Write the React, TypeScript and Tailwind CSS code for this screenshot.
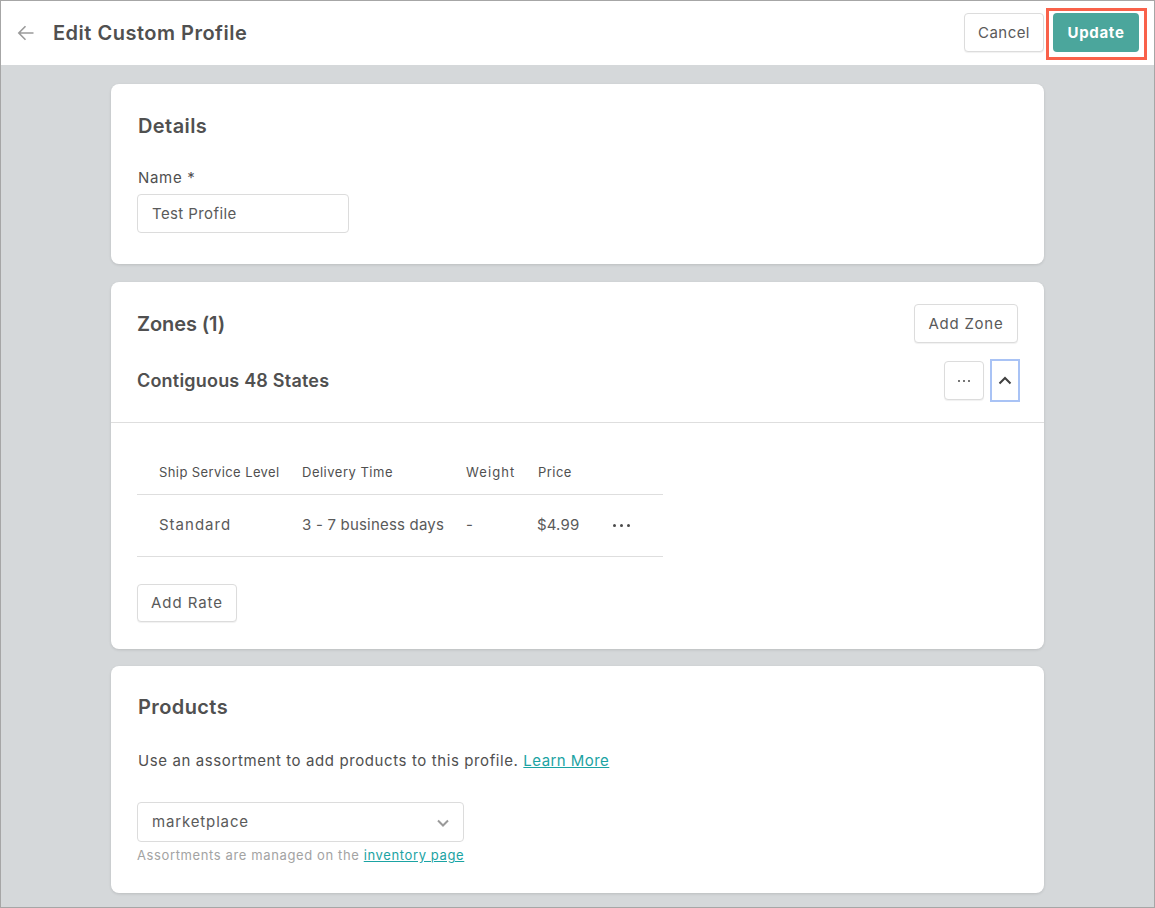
import React from "react";

const btn = "flex items-center justify-center rounded border border-[#dcdcdc] bg-white pt-px text-[15px] text-[#5a5a5a] shadow-[0_1px_1px_rgba(0,0,0,0.06)]";

function Dots({ r = 1.2, gap = 5 }: { r?: number; gap?: number }) {
  return (
    <svg width={gap * 2 + r * 2 + 2} height={r * 2 + 2} fill="#4a4a4a" aria-hidden="true">
      <circle cx={r + 1} cy={r + 1} r={r} />
      <circle cx={r + 1 + gap} cy={r + 1} r={r} />
      <circle cx={r + 1 + gap * 2} cy={r + 1} r={r} />
    </svg>
  );
}

export default function App() {
  return (
    <div className="flex h-[908px] w-[1155px] flex-col overflow-hidden border border-[#a6a6a6] bg-[#d5d8da] font-['Inter',sans-serif] text-[#505050]">
      <header className="flex h-[64px] shrink-0 items-center bg-white pl-4 pr-[7px]">
        <svg width="18" height="18" viewBox="0 0 18 18" fill="none" stroke="#9a9a9a" strokeWidth="1.6" aria-hidden="true">
          <path d="M16.5 9H1.8M8.5 2.2 1.8 9l6.7 6.8" />
        </svg>
        <h1 className="ml-[18px] text-[20px] font-semibold tracking-[0.5px]">Edit Custom Profile</h1>
        <div className="ml-auto flex items-start gap-[2px] self-start pt-[7px]">
          <button className={`${btn} mt-[5px] h-[39px] w-[80px] tracking-[0.45px]`}>Cancel</button>
          <div className="border-[3px] border-[#f9614a] pb-[5px] pl-[4px] pr-[5px] pt-[2px]">
            <button className="flex h-[39px] w-[86px] items-center justify-center rounded bg-[#4ba69c] pt-px text-[15px] font-bold tracking-[0.7px] text-white">Update</button>
          </div>
        </div>
      </header>

      <main className="mx-auto mt-[19px] flex w-[933px] flex-col">
        <section className="h-[180px] rounded-lg bg-white px-[26px] pt-[29px] shadow-[0_1px_3px_rgba(0,0,0,0.12)]">
          <h2 className="ml-px text-[20px] leading-[26px] font-semibold tracking-[0.4px]">Details</h2>
          <label className="ml-px mt-[29px] block text-[15px] leading-[20px] tracking-[0.7px]">Name *</label>
          <div className="mt-[6px] flex h-[39px] w-[212px] items-center rounded border border-[#dcdcdc] px-[14px] pt-px text-[15px] tracking-[0.4px] text-[#5a5a5a]">Test Profile</div>
        </section>

        <section className="mt-[18px] h-[367px] rounded-lg bg-white shadow-[0_1px_3px_rgba(0,0,0,0.12)]">
          <div className="flex items-center justify-between pl-[26px] pr-[26px] pt-[22px]">
            <h2 className="text-[20px] font-semibold tracking-[-0.1px]">Zones (1)</h2>
            <button className={`${btn} h-[39px] w-[104px] tracking-[0.75px]`}>Add Zone</button>
          </div>
          <div className="flex h-[80px] items-center border-b border-[#dedede] pb-[5px] pl-[26px] pr-[24px]">
            <h3 className="pt-px text-[18px] font-semibold tracking-[0.2px]">Contiguous 48 States</h3>
            <button className={`${btn} ml-auto h-[39px] w-[40px]`} aria-label="More"><Dots r={1} gap={5} /></button>
            <button className="ml-[6px] flex h-[43px] w-[30px] items-center justify-center border-2 border-[#a9c3f5] bg-white" aria-label="Collapse">
              <svg width="14" height="9" viewBox="0 0 14 9" fill="none" stroke="#3f3f3f" strokeWidth="2" aria-hidden="true"><path d="M1.5 7.5 7 2l5.5 5.5" /></svg>
            </button>
          </div>
          <div className="ml-[26px] mt-[28px] w-[526px]">
            <div className="flex h-[44px] items-center border-b border-[#dedede] text-[13px]">
              <span className="ml-[22px] w-[143px] tracking-[0.4px]">Ship Service Level</span>
              <span className="w-[164px] tracking-[0.5px]">Delivery Time</span>
              <span className="w-[72px] tracking-[1.1px]">Weight</span>
              <span className="tracking-[0.45px]">Price</span>
            </div>
            <div className="flex h-[62px] items-center border-b border-[#dedede] text-[15px] text-[#5a5a5a]">
              <span className="ml-[22px] w-[143px] tracking-[1px]">Standard</span>
              <span className="w-[164px] tracking-[0.2px]">3 - 7 business days</span>
              <span className="w-[71px]">-</span>
              <span className="w-[75px] tracking-[0.15px]">$4.99</span>
              <Dots r={1.5} gap={7} />
            </div>
          </div>
          <button className={`${btn} ml-[26px] mt-[27px] h-[38px] w-[100px] tracking-[0.95px]`}>Add Rate</button>
        </section>

        <section className="mt-[17px] h-[227px] rounded-lg bg-white px-[26px] pt-[28px] shadow-[0_1px_3px_rgba(0,0,0,0.12)]">
          <h2 className="ml-px text-[20px] leading-[26px] font-semibold tracking-[0.4px]">Products</h2>
          <p className="ml-px mt-[31px] text-[15px] leading-[20px] tracking-[0.6px]">
            Use an assortment to add products to this profile.{" "}
            <a className="text-[#1ba3a3] tracking-[0.45px] underline" href="#">Learn More</a>
          </p>
          <div className="mt-[31px] flex h-[40px] w-[327px] items-center justify-between rounded border border-[#dcdcdc] pl-[14px] pr-[14px] pt-px text-[15px] tracking-[0.85px] text-[#5a5a5a]">
            marketplace
            <svg width="12" height="8" viewBox="0 0 12 8" fill="none" stroke="#9a9a9a" strokeWidth="2" aria-hidden="true"><path d="M1 1.5 6 6.5l5-5" /></svg>
          </div>
          <p className="mt-[4px] text-[13px] leading-[18px] tracking-[0.62px] text-[#a3a3a3]">
            Assortments are managed on the{" "}
            <a className="text-[#1ba3a3] underline" href="#">inventory page</a>
          </p>
        </section>
      </main>
    </div>
  );
}
